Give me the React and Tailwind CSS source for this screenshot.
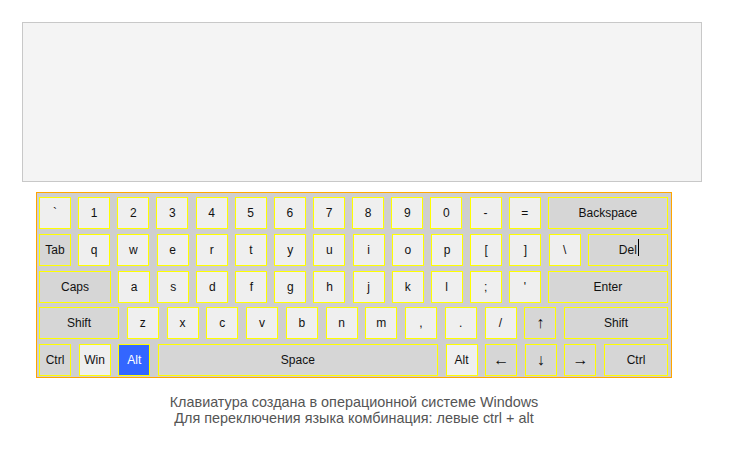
const rows = [
    [
        ['`'], ['1'], ['2'], ['3'], ['4'], ['5'], ['6'], ['7'], ['8'], ['9'], ['0'], ['-'], ['='],
        ['Backspace', 'w-[120px]', 'dark'],
    ],
    [
        ['Tab', 'w-[32px]', 'dark'],
        ['q'], ['w'], ['e'], ['r'], ['t'], ['y'], ['u'], ['i'], ['o'], ['p'], ['['], [']'], ['\\'],
        ['Del', 'w-[80px]', 'dark', true],
    ],
    [
        ['Caps', 'w-[72px]', 'dark'],
        ['a'], ['s'], ['d'], ['f'], ['g'], ['h'], ['j'], ['k'], ['l'], [';'], ["'"],
        ['Enter', 'w-[120px]', 'dark'],
    ],
    [
        ['Shift', 'w-[80px]', 'dark'],
        ['z'], ['x'], ['c'], ['v'], ['b'], ['n'], ['m'], [','], ['.'], ['/'],
        ['↑', 'w-[32px]', 'dark'],
        ['Shift', 'w-[104px]', 'dark'],
    ],
    [
        ['Ctrl', 'w-[32px]', 'dark'],
        ['Win'],
        ['Alt', 'w-[32px]', 'active'],
        ['Space', 'w-[280px]', 'dark'],
        ['Alt'],
        ['←', 'w-[32px]', 'dark'],
        ['↓', 'w-[32px]', 'dark'],
        ['→', 'w-[32px]', 'dark'],
        ['Ctrl', 'w-[64px]', 'dark'],
    ],
]

const arrows = ['↑', '↓', '←', '→']

function Key({ label, width = 'w-[32px]', tone, caret }) {
    const bg =
        tone === 'dark'
            ? 'bg-[#d6d6d6] text-[#111]'
            : tone === 'active'
              ? 'bg-[#3366ff] text-white'
              : 'bg-[#efefef] text-[#111]'
    const size = arrows.includes(label) ? 'text-[16px]' : 'text-[12px]'
    return (
        <div
            className={`${width} h-[32px] shrink-0 border border-[#ffff00] flex items-center justify-center ${size} ${bg}`}
        >
            <span className="relative">
                {label}
                {caret && <span className="absolute left-full top-[-2px] ml-[1px] w-[1px] h-[17px] bg-black" />}
            </span>
        </div>
    )
}

export default function App() {
    return (
        <div className="pl-[22px] pt-[22px] bg-white min-h-screen" style={{ fontFamily: '"Liberation Sans", Arial, sans-serif' }}>
            <div className="w-[680px] h-[160px] border border-[#c8c8c8] bg-[#f4f4f4]" />

            <div className="ml-[14px] mt-[10px] w-[636px] border border-[#ffa500] bg-[#cfcfcf] pl-[2px] pr-[2px] pt-[4px] pb-[1px] flex flex-col gap-[4.75px]">
                {rows.map((row, i) => (
                    <div key={i} className="flex justify-between w-[629px]">
                        {row.map(([label, width, tone, caret], j) => (
                            <Key key={j} label={label} width={width} tone={tone} caret={caret} />
                        ))}
                    </div>
                ))}
            </div>

            <div className="ml-[14px] w-[636px] mt-[16px] text-center text-[14.4px] leading-[16px] text-[#555]">
                <div>Клавиатура создана в операционной системе Windows</div>
                <div>Для переключения языка комбинация: левые ctrl + alt</div>
            </div>
        </div>
    )
}
